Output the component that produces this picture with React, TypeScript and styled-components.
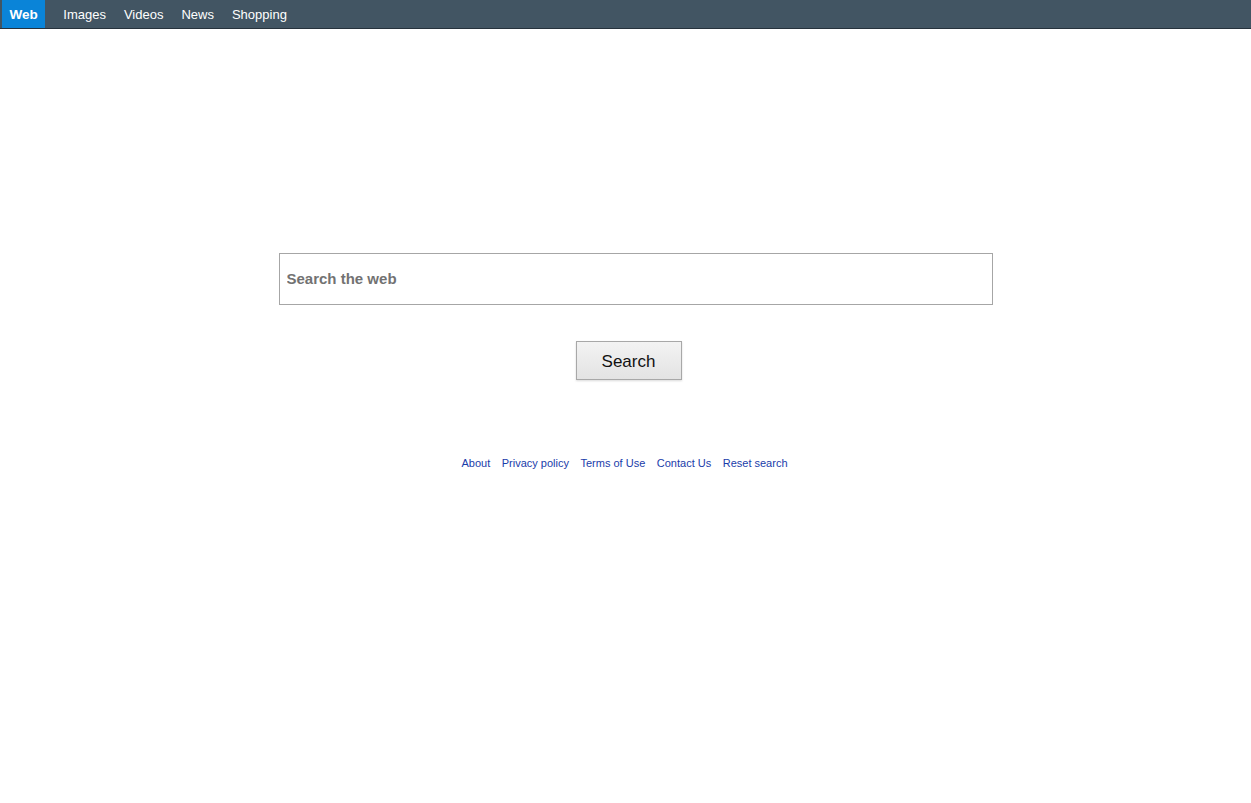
import React from 'react';
import styled, { createGlobalStyle } from 'styled-components';

const GlobalStyle = createGlobalStyle`
  html, body {
    margin: 0;
    padding: 0;
    background: #fff;
    font-family: "Liberation Sans", Arial, sans-serif;
  }
`

const TopBar = styled.nav`
  display: flex;
  align-items: stretch;
  height: 28px;
  padding-left: 2px;
  background-color: #425563;
  border-bottom: 1px solid #26323c;
`

const Tab = styled.a<{ active?: boolean }>`
  display: flex;
  align-items: center;
  padding: 0 ${props => props.active ? '7.5px' : '9.5px'};
  margin-right: ${props => props.active ? '8.5px' : '-1px'};
  background-color: ${props => props.active ? '#0a84d8' : 'transparent'};
  color: #fff;
  font-size: ${props => props.active ? '13.5px' : '13px'};
  font-weight: ${props => props.active ? 'bold' : 'normal'};
  text-decoration: none;
  cursor: pointer;
`

const Main = styled.main`
  display: flex;
  flex-direction: column;
  align-items: center;
  padding-top: 224px;
`

const SearchBox = styled.input`
  box-sizing: border-box;
  width: 714px;
  height: 52px;
  margin-left: 20px;
  padding: 0 7px 1px;
  border: 1px solid #a6a6a6;
  font-family: "Liberation Sans", Arial, sans-serif;
  font-size: 15px;
  font-weight: bold;
  color: #333;
  outline: none;

  &::placeholder {
    color: #727272;
  }
`

const SearchButton = styled.button`
  box-sizing: border-box;
  width: 106px;
  height: 39px;
  margin-top: 36px;
  margin-left: 6px;
  padding-top: 3px;
  border: 1px solid #a8a8a8;
  background: linear-gradient(#f3f3f3, #e3e3e3);
  box-shadow: 0 1px 2px rgba(0, 0, 0, 0.15);
  font-family: "Liberation Sans", Arial, sans-serif;
  font-size: 17px;
  color: #111;
  cursor: pointer;
`

const Footer = styled.div`
  display: flex;
  gap: 11.5px;
  margin-top: 77px;
  margin-right: 2px;
`

const FooterLink = styled.a`
  font-size: 11px;
  color: #1a3caa;
  text-decoration: none;
  cursor: pointer;
`

const tabs = ['Web', 'Images', 'Videos', 'News', 'Shopping']
const links = ['About', 'Privacy policy', 'Terms of Use', 'Contact Us', 'Reset search']

const App: React.FC = () => {
  return (
    <>
      <GlobalStyle />
      <TopBar>
        {tabs.map((t, i) => (
          <Tab key={t} active={i === 0}>{t}</Tab>
        ))}
      </TopBar>
      <Main>
        <SearchBox placeholder="Search the web" />
        <SearchButton>Search</SearchButton>
        <Footer>
          {links.map(l => (
            <FooterLink key={l}>{l}</FooterLink>
          ))}
        </Footer>
      </Main>
    </>
  )
}

export default App
